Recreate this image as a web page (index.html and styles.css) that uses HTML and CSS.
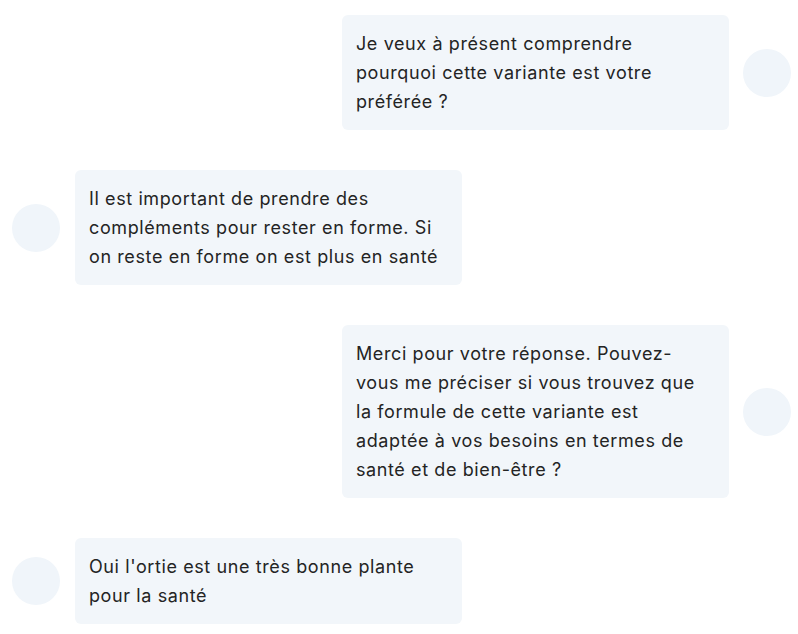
FILE: index.html
```html
<!DOCTYPE html>
<html lang="fr">
<head>
<meta charset="utf-8">
<link rel="stylesheet" href="styles.css">
</head>
<body>
<div class="chat">
  <div class="row user">
    <div class="bubble">Je veux à présent comprendre pourquoi cette variante est votre préférée ?</div>
    <div class="avatar"></div>
  </div>
  <div class="row bot">
    <div class="avatar"></div>
    <div class="bubble">Il est important de prendre des compléments pour rester en forme. Si on reste en forme on est plus en santé</div>
  </div>
  <div class="row user">
    <div class="bubble">Merci pour votre réponse. Pouvez-vous me préciser si vous trouvez que la formule de cette variante est adaptée à vos besoins en termes de santé et de bien-être ?</div>
    <div class="avatar"></div>
  </div>
  <div class="row bot">
    <div class="avatar"></div>
    <div class="bubble">Oui l'ortie est une très bonne plante pour la santé</div>
  </div>
</div>
</body>
</html>
```
FILE: styles.css
```css
html, body {
  margin: 0;
  padding: 0;
  background: #ffffff;
}
.chat {
  display: flex;
  flex-direction: column;
  gap: 40px;
  padding: 15px 7px 0 12px;
  font-family: Inter, "Noto Sans", sans-serif;
  font-size: 18px;
  letter-spacing: 0.6px;
  line-height: 29px;
  color: #242424;
}
.row {
  display: flex;
  align-items: center;
  gap: 14px;
}
.row.user {
  justify-content: flex-end;
}
.row.bot {
  gap: 15px;
}
.bubble {
  width: 387px;
  box-sizing: border-box;
  padding: 14px 15px 14px 14px;
  background: #f2f6fa;
  border-radius: 6px;
}
.avatar {
  width: 48px;
  height: 48px;
  flex: none;
  border-radius: 50%;
  background: #f0f5fa;
}
```
